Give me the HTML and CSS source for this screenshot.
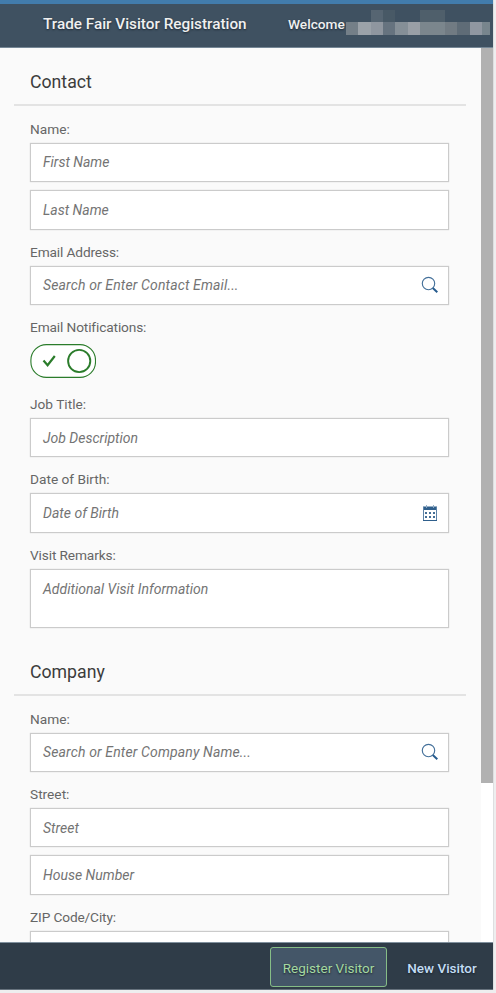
FILE: index.html
```html
<!DOCTYPE html>
<html lang="en">
<head>
<meta charset="utf-8">
<title>Trade Fair Visitor Registration</title>
<link rel="stylesheet" href="styles.css">
</head>
<body>
<div class="app">
  <header class="header">
    <h1 class="title">Trade Fair Visitor Registration</h1>
    <span class="welcome">Welcome</span>
    <svg class="redacted" width="144" height="25" shape-rendering="crispEdges" aria-hidden="true">
      <path fill="#566572" d="M25 0h12v12H25z"/><path fill="#485966" d="M37 0h12v12H37z"/><path fill="#4f5f6b" d="M74 0h25v12H74z"/>
      <path fill="#747f88" d="M0 12h12v13H0z"/><path fill="#9ba2a9" d="M12 12h13v13H12z"/><path fill="#8f969f" d="M25 12h12v13H25z"/><path fill="#66737f" d="M37 12h12v13H37z"/><path fill="#858f97" d="M49 12h13v13H49z"/><path fill="#999fa6" d="M62 12h12v13H62z"/><path fill="#7b868d" d="M74 12h25v13H74z"/><path fill="#717b83" d="M99 12h12v13H99z"/><path fill="#5f6c77" d="M111 12h13v13h-13z"/><path fill="#9097a1" d="M124 12h12v13h-12z"/><path fill="#78858d" d="M136 12h8v13h-8z"/>
    </svg>
  </header>
  <main class="content">
    <form class="form">
      <section class="section">
        <h2 class="heading">Contact</h2>
        <div class="group">
          <label>Name:</label>
          <div class="field"><span>First Name</span></div>
          <div class="field"><span>Last Name</span></div>
        </div>
        <div class="group">
          <label class="snug">Email Address:</label>
          <div class="field search"><span>Search or Enter Contact Email...</span>
            <svg class="icon" width="18" height="18" viewBox="0 0 18 18"><circle cx="7.5" cy="7.5" r="6.2" fill="none" stroke="#44709a" stroke-width="1.15"/><path d="M11.8 12l4.5 4.2" stroke="#265b8e" stroke-width="2"/></svg>
          </div>
        </div>
        <div class="group">
          <label class="snug">Email Notifications:</label>
          <div class="switch">
            <svg width="66" height="34" viewBox="0 0 66 34"><rect x=".9" y=".6" width="64.6" height="32.8" rx="15.5" fill="#fff" stroke="#2b7c2b" stroke-width="1.1"/><path d="M13.5 16.5l4.1 4.7 7.2-9.2" fill="none" stroke="#2b7c2b" stroke-width="2.2"/><circle cx="49.2" cy="17" r="11.1" fill="#fff" stroke="#2b7c2b" stroke-width="1.9"/></svg>
          </div>
        </div>
        <div class="group">
          <label>Job Title:</label>
          <div class="field"><span>Job Description</span></div>
        </div>
        <div class="group">
          <label>Date of Birth:</label>
          <div class="field"><span>Date of Birth</span>
            <svg class="icon" width="18" height="18" viewBox="0 0 18 18"><path d="M2 2.5h14V6H2z" fill="#2f5f8c"/><path d="M2.5 3v13.5h13V3" fill="none" stroke="#5e84a8"/><path d="M2 16.5h14" stroke="#2f5f8c"/><path d="M5.5 1v3m7-3v3" stroke="#8fabc4"/><path d="M4 8h2v2H4zm4 0h2v2H8zm4 0h2v2h-2zM4 12h2v2H4zm4 0h2v2H8zm4 0h2v2h-2z" fill="#456f96"/></svg>
          </div>
        </div>
        <div class="group">
          <label class="snug">Visit Remarks:</label>
          <div class="field area"><span>Additional Visit Information</span></div>
        </div>
      </section>
      <section class="section">
        <h2 class="heading">Company</h2>
        <div class="group">
          <label>Name:</label>
          <div class="field search"><span>Search or Enter Company Name...</span>
            <svg class="icon" width="18" height="18" viewBox="0 0 18 18"><circle cx="7.5" cy="7.5" r="6.2" fill="none" stroke="#44709a" stroke-width="1.15"/><path d="M11.8 12l4.5 4.2" stroke="#265b8e" stroke-width="2"/></svg>
          </div>
        </div>
        <div class="group">
          <label>Street:</label>
          <div class="field"><span>Street</span></div>
          <div class="field"><span>House Number</span></div>
        </div>
        <div class="group">
          <label class="snug">ZIP Code/City:</label>
          <div class="field"></div>
        </div>
      </section>
    </form>
    <div class="scrollbar"><div class="thumb"></div></div>
  </main>
  <footer class="footer">
    <button class="button primary">Register Visitor</button>
    <button class="button plain">New Visitor</button>
  </footer>
</div>
</body>
</html>
```
FILE: styles.css
```css
* { box-sizing: border-box; }
body {
  margin: 0;
  height: 993px;
  overflow: hidden;
  background: #eeeeef;
  font: 13.7px Roboto, sans-serif;
}
.app {
  width: 493px;
  height: 990px;
  display: flex;
  flex-direction: column;
  box-shadow: 1px 0 #dedfe0;
}
.header {
  flex: none;
  height: 48px;
  display: flex;
  background: #3f5161;
  border-top: 4px solid #427cac;
  border-bottom: 1px solid #758796;
  color: #f0f0f0;
  text-shadow: 0 1px 2px #1d2935;
}
.title {
  margin: 0 0 0 43px;
  width: 245px;
  font-size: 15.3px;
  font-weight: 500;
  line-height: 41px;
  white-space: nowrap;
}
.welcome {
  width: 58px;
  font-size: 13.7px;
  font-weight: 500;
  line-height: 41px;
}
.redacted { margin-top: 6px; }
.content {
  flex: none;
  height: 894px;
  display: flex;
  overflow: hidden;
  background: #fafafa;
}
.form { width: 481px; }
.section { padding: 0 32px 10px 30px; }
.heading {
  height: 58px;
  margin: 0 -17px 12.8px -16px;
  padding-left: 16px;
  border-bottom: 2px solid #e3e3e3;
  color: #3c3c3c;
  font-size: 17.7px;
  font-weight: 400;
  line-height: 69px;
}
.group { margin-bottom: 12px; }
.section > .group:last-child { margin-bottom: 0; }
label {
  display: block;
  height: 20px;
  margin-bottom: 4px;
  color: #666;
  line-height: 21px;
}
.snug { letter-spacing: -.13px; }
.field {
  width: 419px;
  height: 39.4px;
  display: flex;
  align-items: center;
  justify-content: space-between;
  padding: 0 9px 0 12px;
  background: #fff;
  border: 1px solid #cbcbcb;
  box-shadow: 0 0 1px #cbcbcb;
  color: #747474;
  font-size: 14px;
  font-style: italic;
}
.search { letter-spacing: .14px; }
.field + .field { margin-top: 8px; }
.area {
  height: 59px;
  align-items: flex-start;
  padding-top: 11px;
}
.switch { height: 53px; margin-bottom: -12px; padding-top: 3.5px; }
.switch svg { display: block; }
.scrollbar { width: 12px; background: #fff; }
.thumb { height: 735px; background: #b1b1b1; }
.footer {
  flex: none;
  height: 48px;
  display: flex;
  align-items: flex-start;
  justify-content: flex-end;
  gap: 20px;
  padding: 4px 16px 0 0;
  background: #2f3c48;
  border-top: 1px solid #80909d;
  border-bottom: 1px solid #66727d;
}
.button {
  height: 40px;
  padding: 1px 0 0;
  border: 0;
  background: none;
  color: #c3ddf4;
  font: 500 13.5px Roboto, sans-serif;
  text-shadow: 0 1px 2px #17212a;
  white-space: nowrap;
}
.primary {
  width: 117px;
  border: 1px solid #86bd87;
  border-radius: 3px;
  background: #445668;
  color: #a5d9a1;
  font-weight: 400;
}
.plain { width: 70px; }
```
